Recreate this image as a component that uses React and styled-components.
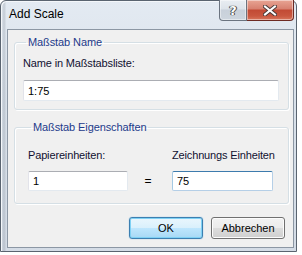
import styled, { createGlobalStyle } from "styled-components"

const Global = createGlobalStyle`
  html, body { margin: 0; padding: 0; background: #fff; }
  body { font-family: "Liberation Sans", Arial, sans-serif; font-size: 11px; }
`

const App = () => {
  return (
    <>
      <Global />
      <Window>
        <TitleBar>
          <Title>Add Scale</Title>
          <Caption>
            <CapButton>?</CapButton>
            <CapButton $close>
              <svg width="14" height="11" viewBox="0 0 14 11">
                <path d="M2 1.5 L12 9.5 M12 1.5 L2 9.5" stroke="#4a3a38" strokeWidth="4" strokeLinecap="square" />
                <path d="M2 1.5 L12 9.5 M12 1.5 L2 9.5" stroke="#fff" strokeWidth="2" strokeLinecap="square" />
              </svg>
            </CapButton>
          </Caption>
        </TitleBar>
        <Client>
          <Group>
            <Legend>Maßstab Name</Legend>
            <Label>Name in Maßstabsliste:</Label>
            <Input defaultValue="1:75" $wide />
          </Group>
          <Group $second>
            <Legend>Maßstab Eigenschaften</Legend>
            <Grid>
              <Label>Papiereinheiten:</Label>
              <span />
              <Label>Zeichnungs Einheiten</Label>
              <Input defaultValue="1" />
              <Equals>=</Equals>
              <Input defaultValue="75" $focused />
            </Grid>
          </Group>
          <Buttons>
            <Button $default>OK</Button>
            <Button>Abbrechen</Button>
          </Buttons>
        </Client>
      </Window>
    </>
  )
}

export default App

const Window = styled.div`
width: 297px;
height: 252px;
box-sizing: border-box;
border: 1px solid #5a6470;
border-radius: 6px 6px 0 0;
background:
  linear-gradient(90deg, transparent 1px, rgba(90,100,112,0.18) 2px, rgba(90,100,112,0.18) 4px, transparent 5px),
  linear-gradient(180deg, #e3eaf2 0%, #d9e1ea 40%, #d4dce6 100%);
box-shadow: inset 1px 1px 0 #f4f7fa;
display: flex;
flex-direction: column;
padding: 0 2px 3px 6px;
`

const TitleBar = styled.div`
height: 28px;
display: flex;
justify-content: space-between;
align-items: flex-start;
`

const Title = styled.div`
margin-top: 6px;
margin-left: 2px;
color: #000;
font-size: 12px;
line-height: 15px;
`

const Caption = styled.div`
display: flex;
margin-top: -1px;
`

const CapButton = styled.div`
width: ${p => (p.$close ? "47px" : "28px")};
height: 21px;
box-sizing: border-box;
border: 1px solid ${p => (p.$close ? "#6d2b24" : "#6b7480")};
border-top: none;
border-left: ${p => (p.$close ? "none" : "1px solid #6b7480")};
border-radius: ${p => (p.$close ? "0 0 4px 0" : "0 0 0 4px")};
background: ${p =>
  p.$close
    ? "linear-gradient(180deg, #e8a594 0%, #d7806f 45%, #c24a34 50%, #c9573f 80%, #d8765c 100%)"
    : "linear-gradient(180deg, #e9edf2 0%, #dde3ea 45%, #c8d0da 50%, #cdd5de 100%)"};
box-shadow: inset 0 0 0 1px rgba(255,255,255,0.45);
display: flex;
align-items: center;
justify-content: center;
color: #fff;
font-family: "DejaVu Sans", sans-serif;
font-weight: bold;
font-size: 13px;
text-shadow: 0 0 1px #333, 0 0 1px #333, 1px 0 0 #555, -1px 0 0 #555;
`

const Client = styled.div`
flex: 1;
border: 1px solid #8c97a4;
background: #f0f0f0;
display: flex;
flex-direction: column;
padding: 4px 0 0 0;
`

const Group = styled.fieldset`
margin: ${p => (p.$second ? "9px 4px 0 6px" : "0 4px 0 6px")};
padding: ${p => (p.$second ? "13px 12px 12px 13px" : "6px 9px 8px 8px")};
border: 1px solid #d5dfe5;
border-radius: 3px;
box-shadow: inset 1px 1px 0 #fff, 1px 1px 0 #fff;
display: flex;
flex-direction: column;
gap: 9px;
min-width: 0;
`

const Legend = styled.legend`
margin-left: 3px;
padding: 0 2px;
color: #1d3a8a;
font-size: 11px;
letter-spacing: -0.1px;
line-height: 16px;
`

const Label = styled.div`
color: #101030;
font-size: 11px;
letter-spacing: -0.15px;
line-height: 15px;
white-space: nowrap;
`

const Grid = styled.div`
display: grid;
grid-template-columns: 100px 44px 101px;
row-gap: 8px;
align-items: center;
`

const Equals = styled.div`
text-align: center;
color: #000;
font-size: 12px;
padding-right: 4px;
`

const Input = styled.input`
box-sizing: border-box;
width: ${p => (p.$wide ? "256px" : "100%")};
height: ${p => (p.$wide ? "21px" : "20px")};
margin: 0;
padding: 0 4px;
font-family: "Liberation Sans", Arial, sans-serif;
font-size: 11px;
color: #000;
background: #fff;
border: 1px solid ${p => (p.$focused ? "#b5cfe7" : "#e3e9ef")};
border-top-color: ${p => (p.$focused ? "#3d7bad" : "#abadb3")};
border-left-color: ${p => (p.$focused ? "#a4c9e3" : "#e2e3ea")};
border-radius: 2px;
outline: none;
`

const Buttons = styled.div`
display: flex;
justify-content: flex-end;
gap: 8px;
margin-top: 13px;
padding-right: 8px;
`

const Button = styled.button`
width: 74px;
height: 22px;
box-sizing: border-box;
font-family: "Liberation Sans", Arial, sans-serif;
font-size: 11px;
color: #000;
border: 1px solid ${p => (p.$default ? "#3c7fb1" : "#707070")};
border-radius: 3px;
background: ${p =>
  p.$default
    ? "linear-gradient(180deg, #eaf6fd 0%, #d9f0fc 50%, #bee6fd 51%, #a7d9f5 100%)"
    : "linear-gradient(180deg, #f2f2f2 0%, #ebebeb 50%, #dddddd 51%, #cfcfcf 100%)"};
box-shadow: ${p =>
  p.$default ? "inset 0 0 0 1px #7fd1f4, 0 0 1px #48a6e0" : "inset 0 0 0 1px #fcfcfc"};
padding: 0;
`
